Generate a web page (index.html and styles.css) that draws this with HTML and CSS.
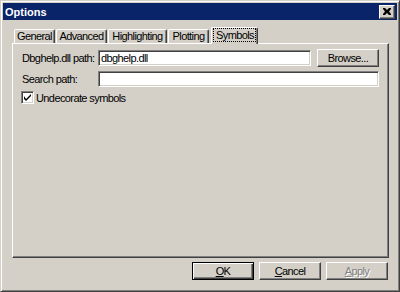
FILE: index.html
```html
<!DOCTYPE html>
<html lang="en">
<head>
    <meta charset="UTF-8">
    <title>Options</title>
    <link rel="stylesheet" href="styles.css">
</head>
<body>
    <div class="window">
        <div class="titlebar">
            <span class="title">Options</span>
            <button class="close-btn" title="Close">
                <svg width="8" height="7" viewBox="0 0 8 7">
                    <path d="M0 0h2l2 2 2-2h2v1L6 3.5 8 6v1H6L4 5 2 7H0V6l2-2.5L0 1z" fill="#000"/>
                </svg>
            </button>
        </div>

        <div class="body">
            <!-- Tab strip -->
            <div class="tabs">
                <div class="tab tab-general">General</div>
                <div class="tab tab-advanced">Advanced</div>
                <div class="tab tab-highlight">Highlighting</div>
                <div class="tab tab-plotting">Plotting</div>
                <div class="tab tab-symbols active"><span class="focus">Symbols</span></div>
            </div>

            <!-- Symbols page -->
            <div class="panel">
                <div class="row">
                    <label class="field-label" for="dbghelp">Dbghelp.dll path:</label>
                    <input class="field short" id="dbghelp" type="text" value="dbghelp.dll">
                    <button class="btn browse">Browse...</button>
                </div>
                <div class="row">
                    <label class="field-label" for="searchpath">Search path:</label>
                    <input class="field long" id="searchpath" type="text" value="">
                </div>
                <div class="row check-row">
                    <span class="checkbox">
                        <svg width="7" height="7" viewBox="0 0 7 7">
                            <path d="M0 2v3l2 2 5-5V0L2 5z" fill="#000"/>
                        </svg>
                    </span>
                    <span>Undecorate symbols</span>
                </div>
            </div>

            <!-- Dialog buttons -->
            <div class="actions">
                <button class="btn default"><u>O</u>K</button>
                <button class="btn"><u>C</u>ancel</button>
                <button class="btn disabled"><u>A</u>pply</button>
            </div>
        </div>
    </div>
</body>
</html>
```

FILE: styles.css
```css
body {
    margin: 0;
    padding: 0;
    background-color: #d4d0c8;
    font-family: 'Liberation Sans', Arial, sans-serif;
    font-size: 11px;
    letter-spacing: -0.6px;
    color: #000;
}
.window {
    width: 400px;
    height: 292px;
    box-sizing: border-box;
    background-color: #d4d0c8;
    border: 1px solid;
    border-color: #d4d0c8 #404040 #404040 #d4d0c8;
    box-shadow: inset 1px 1px 0 #fff, inset -1px -1px 0 #808080;
    padding: 2px;
    display: flex;
    flex-direction: column;
}
.titlebar {
    height: 17px;
    background-color: #0a246a;
    display: flex;
    align-items: center;
    justify-content: space-between;
    padding: 0 2px 0 2px;
}
.title {
    color: #fff;
    font-weight: bold;
    font-size: 11px;
    letter-spacing: 0;
}
.close-btn {
    width: 16px;
    height: 14px;
    padding: 0;
    margin: 0;
    background-color: #d4d0c8;
    border: 1px solid;
    border-color: #fff #404040 #404040 #fff;
    box-shadow: inset -1px -1px 0 #808080;
    display: flex;
    align-items: center;
    justify-content: center;
}
.body {
    flex: 1;
    padding: 7px 8px 0 9px;
    display: flex;
    flex-direction: column;
}
.tabs {
    display: flex;
    align-items: flex-end;
    height: 16px;
    padding-left: 2px;
    position: relative;
    z-index: 1;
}
.tab {
    box-sizing: border-box;
    height: 14px;
    line-height: 13px;
    text-align: center;
    border-left: 1px solid #fff;
    border-top: 1px solid #fff;
    border-right: 1px solid #404040;
    box-shadow: inset -1px 0 0 #808080;
    border-radius: 2px 2px 0 0;
    margin-right: 1px;
    white-space: nowrap;
}
.tab-general {
    width: 41px;
}
.tab-advanced {
    width: 51px;
}
.tab-highlight {
    width: 59px;
}
.tab-plotting {
    width: 41px;
    margin-right: 2px;
}
.tab.active {
    width: 47px;
    height: 17px;
    line-height: 14px;
    margin-bottom: -1px;
    background-color: #d4d0c8;
}
.focus {
    outline: 1px dotted #000;
    padding: 0 1px 0 2px;
}
.panel {
    height: 215px;
    box-sizing: border-box;
    border: 1px solid;
    border-color: #fff #404040 #404040 #fff;
    box-shadow: inset -1px -1px 0 #808080;
    padding: 5px 8px 0 9px;
    display: flex;
    flex-direction: column;
    gap: 4px;
}
.row {
    display: flex;
    align-items: center;
}
.field-label {
    width: 76px;
    white-space: nowrap;
}
.field {
    box-sizing: border-box;
    height: 16px;
    margin: 0;
    padding: 0 2px;
    font-family: inherit;
    font-size: 11px;
    letter-spacing: -0.6px;
    background-color: #fff;
    border: 1px solid;
    border-color: #808080 #fff #fff #808080;
    box-shadow: inset 1px 1px 0 #404040, inset -1px -1px 0 #d4d0c8;
    outline: none;
}
.field.short {
    width: 213px;
}
.field.long {
    width: 281px;
}
.btn {
    box-sizing: border-box;
    width: 62px;
    height: 18px;
    margin: 0;
    padding: 0;
    font-family: inherit;
    font-size: 11px;
    letter-spacing: -0.6px;
    color: #000;
    background-color: #d4d0c8;
    border: 1px solid;
    border-color: #fff #404040 #404040 #fff;
    box-shadow: inset -1px -1px 0 #808080;
}
.browse {
    margin-left: 6px;
}
.check-row {
    gap: 2px;
    margin-left: -1px;
}
.checkbox {
    box-sizing: border-box;
    width: 13px;
    height: 13px;
    background-color: #fff;
    border: 1px solid;
    border-color: #808080 #fff #fff #808080;
    box-shadow: inset 1px 1px 0 #404040, inset -1px -1px 0 #d4d0c8;
    display: flex;
    align-items: center;
    justify-content: center;
}
.actions {
    display: flex;
    justify-content: flex-end;
    gap: 5px;
    padding-top: 4px;
    padding-right: 1px;
}
.btn.default {
    border: 1px solid #000;
    box-shadow: inset 1px 1px 0 #fff, inset -1px -1px 0 #404040, inset -2px -2px 0 #808080;
}
.btn.disabled {
    color: #808080;
    text-shadow: 1px 1px 0 #fff;
}
```
